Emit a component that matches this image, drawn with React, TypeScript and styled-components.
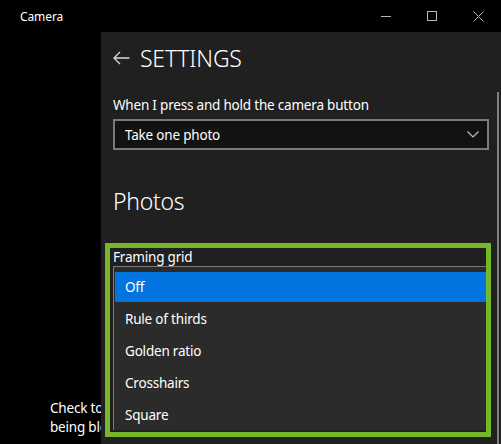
import React from 'react'
import styled, { createGlobalStyle } from 'styled-components'

const GlobalStyle = createGlobalStyle`
  html, body {
    margin: 0;
    padding: 0;
    background: #000;
  }
  body {
    font-family: 'Noto Sans', 'Open Sans', sans-serif;
    color: #fff;
  }
  * {
    box-sizing: border-box;
  }
`

const gridOptions = ['Off', 'Rule of thirds', 'Golden ratio', 'Crosshairs', 'Square']

const App = () => {
  return (
    <>
      <GlobalStyle />
      <StyledWindow>
        <StyledTitleBar>
          <StyledAppTitle>Camera</StyledAppTitle>
          <StyledControls>
            <StyledControl>
              <svg width="10" height="10" viewBox="0 0 10 10">
                <line x1="0" y1="5.5" x2="10" y2="5.5" stroke="#b5b5b5" strokeWidth="1" />
              </svg>
            </StyledControl>
            <StyledControl>
              <svg width="10" height="10" viewBox="0 0 10 10">
                <rect x="0.5" y="0.5" width="9" height="9" fill="none" stroke="#b5b5b5" strokeWidth="1" />
              </svg>
            </StyledControl>
            <StyledControl>
              <svg width="11" height="11" viewBox="0 0 11 11">
                <path d="M0.5 0.5 L10.5 10.5 M10.5 0.5 L0.5 10.5" stroke="#b5b5b5" strokeWidth="1" />
              </svg>
            </StyledControl>
          </StyledControls>
        </StyledTitleBar>
        <StyledBody>
          <StyledBackdrop>
            <StyledHint>Check to make</StyledHint>
            <StyledHint>being blocked</StyledHint>
          </StyledBackdrop>
          <StyledPanel>
            <StyledScrollbar />
            <StyledHeader>
              <svg width="17" height="14" viewBox="0 0 17 14">
                <path d="M7 1 L1 7 L7 13 M1 7 H16.5" fill="none" stroke="#d8d8d8" strokeWidth="1.3" />
              </svg>
              <StyledHeading>SETTINGS</StyledHeading>
            </StyledHeader>
            <StyledFieldLabel>When I press and hold the camera button</StyledFieldLabel>
            <StyledCombo>
              <span>Take one photo</span>
              <svg width="12" height="7" viewBox="0 0 12 7">
                <path d="M0.5 0.5 L6 6 L11.5 0.5" fill="none" stroke="#bdbdbd" strokeWidth="1.2" />
              </svg>
            </StyledCombo>
            <StyledSection>Photos</StyledSection>
            <StyledHighlight>
              <StyledGridLabel>Framing grid</StyledGridLabel>
              <StyledList>
                {gridOptions.map((option, i) => (
                  <StyledOption key={option} $selected={i === 0}>
                    {option}
                  </StyledOption>
                ))}
              </StyledList>
            </StyledHighlight>
          </StyledPanel>
        </StyledBody>
      </StyledWindow>
    </>
  )
}
export default App

const bodyText = `
  font-size: 13.5px;
  letter-spacing: -0.2px;
`

const StyledWindow = styled.div`
  width: 501px;
  height: 444px;
  display: flex;
  flex-direction: column;
  background: #000;
  overflow: hidden;
`
const StyledTitleBar = styled.div`
  height: 32px;
  flex-shrink: 0;
  display: flex;
  align-items: center;
  justify-content: space-between;
`
const StyledAppTitle = styled.div`
  padding-left: 20px;
  font-size: 12px;
  letter-spacing: -0.1px;
  color: #fff;
`
const StyledControls = styled.div`
  display: flex;
  height: 100%;
`
const StyledControl = styled.div`
  width: 46px;
  height: 100%;
  display: flex;
  align-items: center;
  justify-content: center;
`
const StyledBody = styled.div`
  flex: 1;
  min-height: 0;
  display: flex;
`
const StyledBackdrop = styled.div`
  width: 101px;
  flex-shrink: 0;
  overflow: hidden;
  display: flex;
  flex-direction: column;
  justify-content: flex-end;
  padding: 0 0 7px 50px;
`
const StyledHint = styled.div`
  ${bodyText}
  line-height: 19px;
  white-space: nowrap;
  color: #fff;
`
const StyledPanel = styled.div`
  position: relative;
  flex: 1;
  background: #202020;
  padding: 0 12px;
  overflow: hidden;
`
const StyledScrollbar = styled.div`
  position: absolute;
  top: 60px;
  bottom: 0;
  right: 2px;
  width: 2px;
  background: #7d7d7d;
`
const StyledHeader = styled.div`
  display: flex;
  align-items: center;
  gap: 10px;
  height: 30px;
  margin-top: 11px;
`
const StyledHeading = styled.div`
  font-size: 23px;
  font-weight: 300;
  line-height: 30px;
  letter-spacing: -0.2px;
`
const StyledFieldLabel = styled.div`
  ${bodyText}
  margin-top: 22px;
  line-height: 20px;
`
const StyledCombo = styled.div`
  ${bodyText}
  margin-top: 4px;
  height: 31px;
  border: 2px solid #7a7a7a;
  background: #121212;
  display: flex;
  align-items: center;
  justify-content: space-between;
  padding: 0 8px 0 10px;
`
const StyledSection = styled.div`
  margin-top: 35px;
  font-size: 23px;
  font-weight: 300;
  letter-spacing: -0.3px;
  line-height: 32px;
`
const StyledHighlight = styled.div`
  margin: 26px -2px 0 -8px;
  border: 5px solid #77b82a;
  padding-left: 3px;
  overflow: hidden;
`
const StyledGridLabel = styled.div`
  ${bodyText}
  height: 18px;
  line-height: 18px;
`
const StyledList = styled.div`
  width: 400px;
  border-top: 1px solid #7a7a7a;
  border-left: 1px solid #7a7a7a;
  background: #2b2b2b;
  padding: 5px 0 0 1px;
`
const StyledOption = styled.div<{ $selected: boolean }>`
  ${bodyText}
  height: 30px;
  margin-bottom: 2px;
  padding-left: 10px;
  display: flex;
  align-items: center;
  background: ${(p) => (p.$selected ? '#0174df' : 'transparent')};
`
